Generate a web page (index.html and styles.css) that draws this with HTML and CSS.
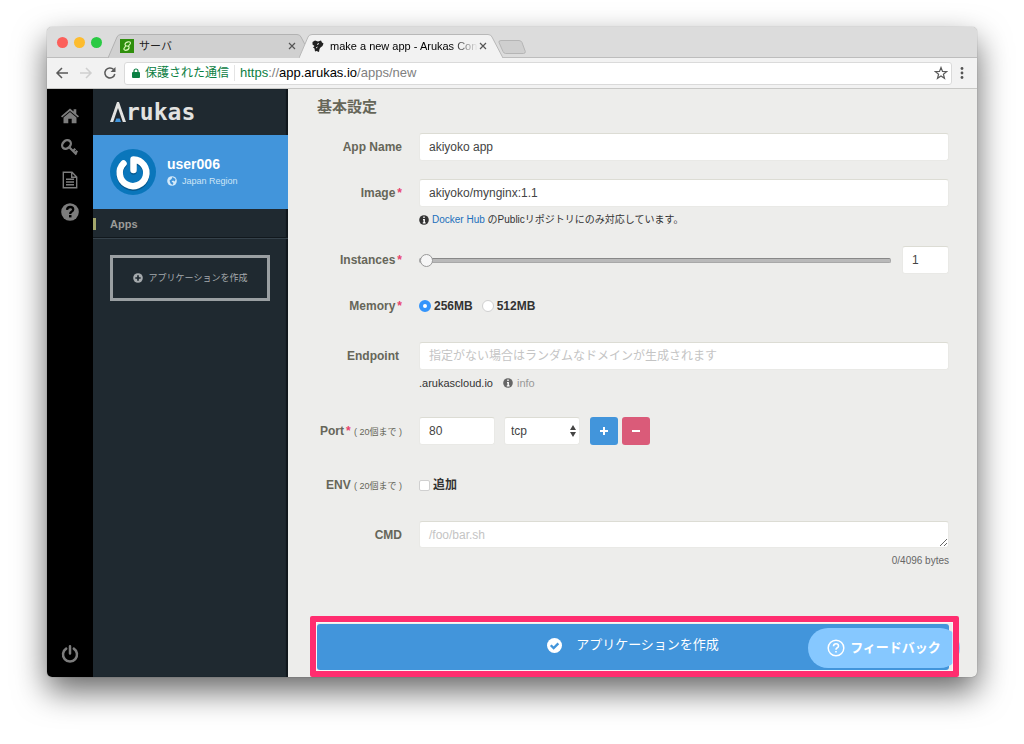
FILE: index.html
```html
<!DOCTYPE html>
<html lang="ja">
<head>
<meta charset="utf-8">
<meta name="viewport" content="width=device-width, initial-scale=1">
<title>make a new app - Arukas Control Panel</title>
<link rel="stylesheet" href="styles.css">
</head>
<body>
<div class="window">
  <header class="tabstrip">
    <div class="lights">
      <span class="light light-red"></span><span class="light light-amber"></span><span class="light light-green"></span>
    </div>
    <div class="tab">
      <svg class="tab-shape" viewBox="0 0 204 24" preserveAspectRatio="none"><path d="M0 24 L9 3 Q10 .5 13 .5 H189 Q192 .5 193 3 L204 24" fill="#d0d0d0" stroke="#b2b2b2"/></svg>
      <svg class="favicon" viewBox="0 0 14 14"><rect width="14" height="14" fill="#2f8f0c"/><path d="M10.5 4.500 Q10.500 2.500 8 2.800 Q5 3.500 5 5.500 Q5 7 7 7 Q9.500 7 9 9 Q8.500 11.300 5.500 11.300 Q3.500 11 4 9.500 L6 6.500 M8.500 7 L10.500 4.500" fill="none" stroke="#d8f5b8" stroke-width="1.200"/></svg>
      <span class="tab-title">サーバ</span>
      <button class="tab-close" aria-label="Close tab"><svg viewBox="0 0 8 8"><path d="M1 1 L7 7 M7 1 L1 7"/></svg></button>
    </div>
    <div class="tab tab-active">
      <svg class="tab-shape" viewBox="0 0 204 24" preserveAspectRatio="none"><path d="M0 24 L9 3 Q10 .5 13 .5 H189 Q192 .5 193 3 L204 24" fill="#f2f2f2" stroke="#b8b8b8"/></svg>
      <svg class="favicon" viewBox="0 0 14 14"><path d="M1.500 3 L4 1.500 L7 2.500 L10 1.500 L11 3.500 L12.500 4.500 L11.500 7 L9.500 8.500 L8.500 10 L8 13 L5.500 12 L4 12.500 L3.500 9.500 L2 8.500 L3.500 7 L1.500 5.500 Z" fill="#222"/><path d="M6 5.500 L8 4.500 M5 9 L6.500 8" stroke="#eee"/></svg>
      <span class="tab-title tab-title-fade">make a new app - Arukas Con</span>
      <button class="tab-close" aria-label="Close tab"><svg viewBox="0 0 8 8"><path d="M1 1 L7 7 M7 1 L1 7"/></svg></button>
    </div>
    <button class="newtab" aria-label="New tab"><svg viewBox="0 0 28 14"><path d="M3 .5 H21 Q23 .5 24 2.500 L27.300 11.500 Q27.500 13.500 25.500 13.500 H7.500 Q6 13.500 5 11.500 L1 2.500 Q.5 .5 3 .5Z" fill="#cfcfcf" stroke="#b5b5b5"/></svg></button>
  </header>

  <div class="toolbar">
    <div class="nav">
      <button class="nav-btn" aria-label="Back"><svg viewBox="0 0 14 14"><path d="M13 7 H2 M7 2 L2 7 L7 12" stroke="#5a5a5a"/></svg></button>
      <button class="nav-btn" aria-label="Forward" disabled><svg viewBox="0 0 14 14"><path d="M1 7 H12 M7 2 L12 7 L7 12" stroke="#cfcfcf"/></svg></button>
      <button class="nav-btn" aria-label="Reload"><svg viewBox="0 0 14 14"><path d="M11.800 8 A5 5 0 1 1 10.600 3.600" stroke="#5a5a5a"/><path d="M12.500 1 V6 H7.500Z" fill="#5a5a5a" stroke="none"/></svg></button>
    </div>
    <div class="address">
      <svg class="lock" viewBox="0 0 8 10"><rect y="4" width="8" height="6" rx="1" fill="#0b8043"/><path d="M2 5 V3 A2 2 0 0 1 6 3 V5" fill="none" stroke="#0b8043" stroke-width="1.200"/></svg>
      <span class="secure">保護された通信</span>
      <span class="url"><span class="url-scheme">https</span>://<span class="url-host">app.arukas.io</span>/apps/new</span>
      <button class="star" aria-label="Bookmark"><svg viewBox="0 0 14 14"><path d="M7 1.500 L8.500 5.400 L12.700 5.600 L9.400 8.200 L10.500 12.300 L7 10 L3.500 12.300 L4.600 8.200 L1.300 5.600 L5.500 5.400Z" fill="none" stroke="#5a5a5a" stroke-width="1.200"/></svg></button>
    </div>
    <button class="menu" aria-label="Menu"><svg viewBox="0 0 4 14"><circle cx="2" cy="2.500" r="1.400"/><circle cx="2" cy="7" r="1.400"/><circle cx="2" cy="11.500" r="1.400"/></svg></button>
  </div>

  <div class="page">
    <nav class="rail">
      <a href="#" aria-label="Home"><svg viewBox="0 0 18 18"><path d="M0 9.300 L9 1.500 L12.600 4.600 V2.300 H15.300 V6.900 L18 9.300 L16.900 10.600 L9 3.900 L1.100 10.600Z"/><path d="M9 4.900 L15.500 10.400 V16.300 H10.700 V11.700 H7.300 V16.300 H2.500 V10.400Z"/></svg></a>
      <a href="#" aria-label="Keys"><svg viewBox="0 0 18 18"><g fill="none" stroke="#7c7c7c"><ellipse cx="5.500" cy="5.500" rx="4.800" ry="3.800" transform="rotate(-45 5.500 5.500)" stroke-width="2.300"/><path d="M8 8 L15.500 15.500 M12 12 L14.300 9.700 M14 14.200 L16.300 11.900" stroke-width="2.200"/></g></svg></a>
      <a href="#" aria-label="Documents"><svg viewBox="0 0 18 18"><g fill="none" stroke="#7c7c7c" stroke-width="1.400"><path d="M2.300 1.300 H11 L15.700 6 V16.700 H2.300Z M10.700 1.300 V6.300 H15.700"/><path d="M5 8.300 H13 M5 11 H13 M5 13.700 H13"/></g></svg></a>
      <a href="#" aria-label="Help"><svg viewBox="0 0 18 18"><circle cx="9" cy="9" r="8.800"/><path d="M6 6.800 Q6.300 4 9.200 4 Q12.200 4 12.200 6.500 Q12.200 7.800 10.500 8.800 Q9.200 9.600 9.200 11" fill="none" stroke="#000" stroke-width="2.300"/><rect x="8" y="12" width="2.500" height="2.400" fill="#000"/></svg></a>
      <a href="#" class="rail-power" aria-label="Log out"><svg viewBox="0 0 18 18"><path d="M5.200 3.600 A7 7 0 1 0 12.800 3.600 M9 1.300 V8.500" fill="none" stroke="#7c7c7c" stroke-width="2.500" stroke-linecap="round"/></svg></a>
    </nav>

    <aside class="panel">
      <a class="logo" href="#" aria-label="Arukas">
        <svg viewBox="0 0 16 20"><path d="M0 20 L7 0 H9 L16 20 H12.800 L8 6 L3.200 20Z" fill="#e2e2e0"/><path d="M6.300 16.500 H9.700 L11 20 H5Z" fill="#4295db"/></svg>
        <span>rukas</span>
      </a>
      <div class="user">
        <svg class="avatar" viewBox="0 0 46 46"><circle cx="23" cy="23" r="23" fill="#0a76bb"/><g fill="none" stroke-width="6.500" stroke-linecap="round" stroke-linejoin="round"><path d="M23.500 21.500 V11 A13.300 13.300 0 1 1 13.500 15" stroke="#07598f" transform="translate(0 1)"/><path d="M23.500 21 V10.500 A13.300 13.300 0 1 1 13.500 14.500" stroke="#fff"/></g></svg>
        <div>
          <div class="user-name">user006</div>
          <div class="user-region"><svg viewBox="0 0 10 10"><circle cx="5" cy="5" r="4.800" fill="#d5eaf9"/><path d="M5.500 1 L8.500 3 L8 5.500 L6 4.500 L4.500 5.500 L6.500 7 L5.500 9 L3.500 7.500 L2.500 4.500 L4.500 3Z" fill="#4295db"/></svg>Japan Region</div>
        </div>
      </div>
      <a class="apps" href="#">Apps</a>
      <button class="create"><svg viewBox="0 0 10 10"><circle cx="5" cy="5" r="4.800" fill="#a5aaad"/><path d="M5 2.300 V7.700 M2.300 5 H7.700" stroke="#1f2930" stroke-width="1.700"/></svg>アプリケーションを作成</button>
    </aside>

    <main class="main">
      <h1>基本設定</h1>
      <form class="form" onsubmit="return false">
        <div class="row">
          <label class="label" for="name">App Name</label>
          <input class="field" id="name" value="akiyoko app">
        </div>
        <div class="row">
          <label class="label" for="image">Image<b class="req">*</b></label>
          <div>
            <input class="field" id="image" value="akiyoko/mynginx:1.1">
            <div class="hint"><svg class="info" viewBox="0 0 10 10"><circle cx="5" cy="5" r="4.800"/><path d="M5 1.600 V3 M4 4.600 H5.200 V7.800 M3.800 7.900 H6.600" stroke="#fff" stroke-width="1.400" fill="none"/></svg><span><a href="#">Docker Hub</a> のPublicリポジトリにのみ対応しています。</span></div>
          </div>
        </div>
        <div class="row">
          <label class="label" for="instances">Instances<b class="req">*</b></label>
          <div class="slide">
            <input class="slider" type="range" id="instances" min="1" max="10" value="1">
            <input class="field count" value="1" aria-label="Instance count">
          </div>
        </div>
        <div class="row row-loose" role="radiogroup" aria-labelledby="memory">
          <span class="label" id="memory">Memory<b class="req">*</b></span>
          <div class="choices">
            <label><input type="radio" name="memory" checked>256MB</label>
            <label><input type="radio" name="memory">512MB</label>
          </div>
        </div>
        <div class="row row-wide">
          <label class="label label-plain" for="endpoint">Endpoint</label>
          <div>
            <input class="field" id="endpoint" placeholder="指定がない場合はランダムなドメインが生成されます">
            <div class="hint domain"><span>.arukascloud.io</span><svg class="info" viewBox="0 0 10 10"><circle cx="5" cy="5" r="4.800"/><path d="M5 1.600 V3 M4 4.600 H5.200 V7.800 M3.800 7.900 H6.600" stroke="#fff" stroke-width="1.400" fill="none"/></svg><span class="muted">info</span></div>
          </div>
        </div>
        <div class="row row-wide">
          <label class="label" for="port">Port<b class="req">*</b> <small>( 20個まで )</small></label>
          <div class="ports">
            <input class="field port" id="port" value="80">
            <span class="select"><select class="field" aria-label="Protocol"><option>tcp</option><option>udp</option></select><svg viewBox="0 0 6 12"><path d="M3 0 L6 5 H0Z M3 12 L6 7 H0Z" fill="#444"/></svg></span>
            <button class="sq sq-add" type="button" aria-label="Add port"><svg viewBox="0 0 8 8"><path d="M4 0 V8 M0 4 H8"/></svg></button>
            <button class="sq sq-del" type="button" aria-label="Remove port"><svg viewBox="0 0 8 8"><path d="M0 4 H8"/></svg></button>
          </div>
        </div>
        <div class="row row-loose">
          <span class="label" id="env">ENV <small>( 20個まで )</small></span>
          <div class="choices">
            <label><input type="checkbox" aria-describedby="env">追加</label>
          </div>
        </div>
        <div class="row row-last">
          <label class="label" for="cmd">CMD</label>
          <div>
            <textarea class="field" id="cmd" rows="1" placeholder="/foo/bar.sh"></textarea>
            <div class="hint bytes">0/4096 bytes</div>
          </div>
        </div>
        <button class="submit" type="submit"><svg viewBox="0 0 14 14"><circle cx="7" cy="7" r="7" fill="#fff"/><path d="M3.500 6.800 L6.200 9.500 L10.600 5" fill="none" stroke="#4295db" stroke-width="2.200"/></svg>アプリケーションを作成</button>
      </form>
      <button class="feedback"><svg viewBox="0 0 18 18"><g fill="none" stroke="#fff"><circle cx="9" cy="9" r="7.800" stroke-width="1.500"/><path d="M6.500 7.200 Q6.700 4.800 9 4.800 Q11.500 4.800 11.500 7 Q11.500 8.200 10 9 Q9 9.700 9 10.800 M9 12 V13.500" stroke-width="1.600"/></g></svg>フィードバック</button>
      <div class="highlight"></div>
    </main>
  </div>
</div>
</body>
</html>
```

FILE: styles.css
```css
* {
  box-sizing: border-box;
}

body {
  margin: 0;
  padding: 27px 47px 67px;
  background: #fff;
  color: #333;
  font: 12px/16px "Liberation Sans", "Noto Sans CJK JP", sans-serif;
}

button,
input,
select,
textarea {
  margin: 0;
  font: inherit;
  color: inherit;
}

button {
  display: flex;
  align-items: center;
  justify-content: center;
  padding: 0;
  border: 0;
  background: none;
}

svg {
  display: block;
  flex: none;
}

a {
  color: #1c6fbb;
  text-decoration: none;
}

.window {
  border-radius: 5px;
  overflow: hidden;
  background: #ededeb;
  box-shadow: 0 0 1px rgba(0, 0, 0, 0.5), 0 14px 32px rgba(0, 0, 0, 0.6);
}

/* Browser chrome */
.tabstrip {
  display: flex;
  align-items: flex-end;
  height: 31px;
  padding-left: 10px;
  background: #dcdcdc;
  box-shadow: inset 0 -1px #bdbdbd;
}

.lights {
  display: flex;
  gap: 6px;
  width: 51px;
  padding-bottom: 10px;
}

.light {
  width: 11px;
  height: 11px;
  border-radius: 50%;
}

.light-red { background: #fc605b; }
.light-amber { background: #fdbc2e; }
.light-green { background: #2aca44; }

.tab {
  position: relative;
  display: flex;
  align-items: center;
  width: 204px;
  height: 24px;
  padding: 0 16px 0 12px;
  font-size: 11px;
  color: #222;
}

.tab-active {
  z-index: 1;
  margin-left: -13px;
}

.tab-shape {
  position: absolute;
  inset: 0;
  width: 100%;
  height: 100%;
}

.favicon,
.tab-title,
.tab-close {
  position: relative;
}

.favicon {
  width: 14px;
  height: 14px;
}

.tab-title {
  flex: 1;
  margin: 0 1px 0 5px;
  white-space: nowrap;
}

.tab-title-fade {
  color: #000;
  -webkit-mask-image: linear-gradient(90deg, #000 82%, transparent);
  mask-image: linear-gradient(90deg, #000 82%, transparent);
}

.tab-close svg {
  width: 8px;
  height: 8px;
  stroke: #555;
  stroke-width: 1.2;
}

.newtab {
  height: 22px;
  margin-left: -5px;
}

.newtab svg {
  width: 28px;
  height: 14px;
}

.toolbar {
  display: flex;
  align-items: center;
  height: 31px;
  padding: 0 13px 0 8px;
  background: #f2f2f2;
  border-bottom: 1px solid #c8c8c6;
}

.nav {
  display: flex;
  gap: 10px;
}

.nav svg {
  width: 14px;
  height: 14px;
  fill: none;
  stroke-width: 1.5;
}

.address {
  display: flex;
  flex: 1;
  align-items: center;
  height: 23px;
  margin: 0 8px 0 7px;
  padding: 0 3px 0 7px;
  border: 1px solid #dadada;
  border-radius: 3px;
  background: #fff;
}

.lock {
  width: 8px;
  height: 10px;
}

.secure {
  margin: 0 5px;
  padding-right: 5px;
  border-right: 1px solid #e4e4e4;
  color: #0b8043;
}

.url {
  flex: 1;
  font-size: 13px;
  color: #808080;
}

.url-scheme { color: #0b8043; }
.url-host { color: #000; }

.star svg {
  width: 14px;
  height: 14px;
}

.menu svg {
  width: 4px;
  height: 14px;
  fill: #555;
}

/* Page */
.page {
  display: flex;
}

.rail {
  display: flex;
  flex-direction: column;
  align-items: center;
  gap: 14px;
  width: 46px;
  padding: 18px 0 14px;
  background: #000;
}

.rail svg {
  width: 18px;
  height: 18px;
  fill: #7c7c7c;
}

.rail-power {
  margin-top: auto;
}

.panel {
  width: 195px;
  background: #1f2930;
  box-shadow: inset -2px 0 1px #10171c;
}

.logo {
  display: flex;
  align-items: center;
  height: 46px;
  padding-left: 17px;
  color: #e2e2e0;
  font: bold 23px/22px "DejaVu Sans Mono", monospace;
}

.logo svg {
  width: 16px;
  height: 20px;
}

.user {
  display: flex;
  align-items: center;
  gap: 11px;
  height: 74px;
  padding-left: 17px;
  background: #4295db;
  color: #fff;
}

.avatar {
  width: 46px;
  height: 46px;
}

.user-name {
  font: bold 14px/18px "Liberation Sans", sans-serif;
}

.user-region {
  display: flex;
  align-items: center;
  gap: 5px;
  color: #cfe5f6;
  font-size: 9px;
}

.user-region svg,
.create svg,
.info {
  width: 10px;
  height: 10px;
}

.apps {
  display: flex;
  align-items: center;
  height: 30px;
  border-bottom: 1px solid #35414a;
  box-shadow: inset 0 -1px #11181d;
  color: #9b9b99;
  font-size: 11px;
  font-weight: bold;
}

.apps::before {
  content: "";
  width: 3px;
  height: 12px;
  margin-right: 14px;
  background: #a3a76c;
}

.create {
  gap: 6px;
  width: 160px;
  height: 46px;
  margin: 16px 0 0 17px;
  border: 3px solid #9a9fa2;
  color: #a5aaad;
  font-size: 9px;
}

.main {
  position: relative;
  flex: 1;
  min-width: 0;
  padding: 6px 28px 7px 29px;
}

h1 {
  margin: 0 0 14px;
  color: #666659;
  font-size: 15px;
  line-height: 24px;
}

.row {
  display: grid;
  grid-template-columns: 85px 1fr;
  column-gap: 17px;
  margin-bottom: 18px;
}

.row-loose { margin-bottom: 22px; }
.row-wide { margin-bottom: 26px; }
.row-last { margin-bottom: 55px; }

.label {
  color: #666659;
  font-weight: bold;
  line-height: 28px;
  text-align: right;
  white-space: nowrap;
}

.label-plain {
  padding-right: 3px;
}

.label small {
  font-size: 9px;
  font-weight: normal;
  line-height: 1;
}

.req {
  margin-left: 2px;
  color: #e8436e;
}

.field {
  display: block;
  width: 100%;
  height: 28px;
  padding: 0 9px;
  border: 1px solid #e9e9e6;
  border-top-color: #dcdcd4;
  border-radius: 3px;
  background: #fff;
  color: #444;
}

.field::placeholder {
  color: #c4c4c4;
}

textarea.field {
  min-height: 27px;
  height: 27px;
  padding-top: 5px;
  overflow: hidden;
  resize: vertical;
}

.hint {
  display: flex;
  align-items: center;
  gap: 3px;
  margin-top: 5px;
  font-size: 10px;
}

.info {
  fill: #333;
}

.domain {
  gap: 4px;
  font-size: 11px;
}

.domain .info {
  margin-left: 6px;
  fill: #666;
}

.muted { color: #999; }

.bytes {
  justify-content: flex-end;
  color: #666;
}

.slide {
  display: flex;
  align-items: center;
  gap: 11px;
}

.slider {
  flex: 1;
  min-width: 0;
  height: 14px;
  appearance: none;
  background: none;
}

.slider::-webkit-slider-runnable-track {
  height: 5px;
  border: 1px solid #a8a8a8;
  border-top-color: #888;
  border-radius: 2px;
  background: #b9b9b9;
}

.slider::-webkit-slider-thumb {
  width: 13px;
  height: 13px;
  margin-top: -5px;
  appearance: none;
  border: 1px solid #999;
  border-radius: 50%;
  background: #f6f6f6;
}

.count {
  width: 47px;
}

.choices,
.choices label {
  display: flex;
  align-items: center;
}

.choices {
  gap: 9px;
  font-weight: bold;
}

.choices label {
  gap: 3px;
}

.choices input {
  width: 12px;
  height: 12px;
  appearance: none;
  border: 1px solid #d0d0d0;
  border-radius: 50%;
  background: #fff;
}

.choices input[type="checkbox"] {
  width: 11px;
  height: 11px;
  border-radius: 2px;
}

.choices input[type="radio"]:checked {
  border: 4px solid #3394fb;
}

.choices input[type="checkbox"]:checked {
  background: #3394fb;
}

.ports {
  display: flex;
  gap: 4px;
}

.port {
  width: 76px;
}

.select {
  position: relative;
  width: 76px;
  margin: 0 6px 0 5px;
}

.select select {
  padding: 0 6px;
  appearance: none;
}

.select svg {
  position: absolute;
  top: 8px;
  right: 4px;
  width: 6px;
  height: 12px;
  pointer-events: none;
}

.sq {
  width: 28px;
  height: 28px;
  border-radius: 3px;
}

.sq svg {
  width: 8px;
  height: 8px;
  stroke: #fff;
  stroke-width: 2;
}

.sq-add { background: #4295db; }
.sq-del { background: #da5b79; }

.submit {
  gap: 14px;
  width: 100%;
  height: 46px;
  padding-bottom: 4px;
  border-radius: 3px;
  background: #4295db;
  color: #fff;
  font-size: 13px;
}

.submit svg {
  width: 15px;
  height: 15px;
}

/* Overlays at the foot of the form */
.feedback {
  position: absolute;
  right: 17px;
  bottom: 9px;
  gap: 5px;
  width: 152px;
  height: 40px;
  border-radius: 20px;
  background: #86c8ff;
  color: #fff;
  font-size: 13px;
  font-weight: bold;
}

.feedback svg {
  width: 18px;
  height: 18px;
}

.highlight {
  position: absolute;
  right: 18px;
  bottom: 0;
  left: 22px;
  height: 61px;
  border: 6px solid #ff2d6f;
  border-radius: 2px;
  box-shadow: inset 0 0 0 1px rgba(255, 255, 255, 0.6);
  pointer-events: none;
}
```
